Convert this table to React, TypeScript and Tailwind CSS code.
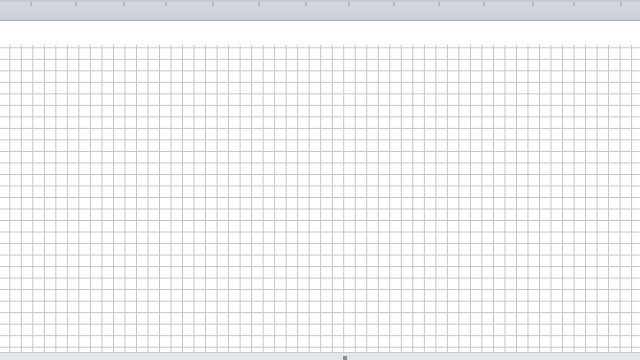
import React from "react";

const ticks = [30, 75, 123, 165, 212, 258, 305, 348, 393, 438, 483, 532, 573, 620];

export default function App() {
  return (
    <div className="flex h-[360px] w-[640px] flex-col overflow-hidden bg-white font-['Liberation_Sans',sans-serif]">
      <div className="relative h-[21px] shrink-0 border-b border-[#a7acb5] bg-[linear-gradient(to_bottom,#bfc4cc_0px,#d3d7de_3px,#cbcfd7_100%)]">
        {ticks.map((x) => (
          <span key={x} className="absolute top-[2px] h-[4px] w-[2px] bg-[#b3b8c0]" style={{ left: x }} />
        ))}
      </div>
      <div className="h-[24px] shrink-0 bg-white" />
      <div className="flex-1 bg-white bg-[linear-gradient(to_right,#c4c4c4_1px,transparent_1px),linear-gradient(to_bottom,#c4c4c4_1px,transparent_1px)] bg-[size:11.52px_11.52px] bg-[position:9.3px_2.3px]" />
      <div className="relative h-[8px] shrink-0 border-t border-[#c5cbd4] bg-[#e3e6eb]">
        <span className="absolute left-[343px] top-[3px] h-[5px] w-[4px] bg-[#8a8d92]" />
      </div>
    </div>
  );
}
